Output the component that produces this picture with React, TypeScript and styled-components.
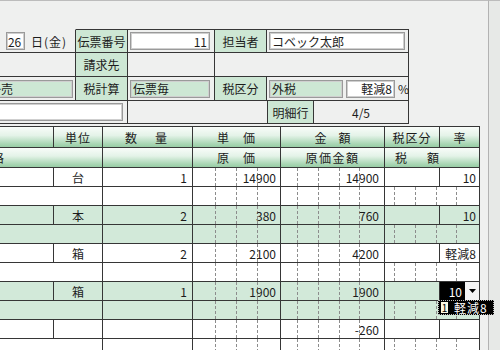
import React from 'react';
import styled, { createGlobalStyle } from 'styled-components';

const LINE = '#363636';
const LABEL_BG = '#cde7d4';
const ROW_GREEN = '#d2e9d9';
const GUIDE = '#8c8c8c';

const GlobalStyle = createGlobalStyle`
  html, body {
    margin: 0;
    padding: 0;
    background: #eff0ef;
    overflow: hidden;
  }
  body {
    font-family: "Noto Sans CJK JP", "Noto Sans", sans-serif;
    font-size: 12px;
    color: #1c1c1c;
  }
`;

type Align = 'left' | 'center' | 'right';

const justify = (a?: Align) =>
  a === 'right' ? 'flex-end' : a === 'center' ? 'center' : 'flex-start';

// dashed digit guides drawn as background layers
const guideLayers = (xs?: number[]) =>
  xs && xs.length
    ? `
    background-image: ${xs.map(() => `linear-gradient(to bottom, ${GUIDE} 60%, transparent 60%)`).join(', ')};
    background-size: 1px 5px;
    background-repeat: repeat-y;
    background-position: ${xs.map(x => `${x}px 0`).join(', ')};
  `
    : '';

const Screen = styled.div`
  display: flex;
  width: 500px;
  height: 350px;
`;

const Panel = styled.div`
  position: relative;
  box-sizing: border-box;
  flex: 0 0 489px;
  height: 350px;
  padding-top: 28px;
  border-top: 1px solid #bcbcbc;
  border-right: 1px solid #b2b2b2;
`;

const SideStrip = styled.div`
  flex: 1;
  border-top: 1px solid #bcbcbc;
  background: #e7e9e7;
`;

const Form = styled.div`
  margin-left: -40px;
  width: 520px;
`;

const TopSection = styled.div`
  width: 449px;
  border-bottom: 1px solid ${LINE};
`;

const TopRow = styled.div<{ $h: number }>`
  display: flex;
  height: ${p => p.$h}px;
`;

const Cell = styled.div<{
  $w: number;
  $bg?: string;
  $align?: Align;
  $pl?: number;
  $pr?: number;
  $noTop?: boolean;
  $guides?: number[];
  $ls?: number;
}>`
  position: relative;
  box-sizing: border-box;
  flex: 0 0 ${p => p.$w}px;
  width: ${p => p.$w}px;
  height: 100%;
  display: flex;
  align-items: center;
  justify-content: ${p => justify(p.$align)};
  padding: 0 ${p => p.$pr ?? 0}px 0 ${p => p.$pl ?? 0}px;
  border-top: 1px solid ${p => (p.$noTop ? 'transparent' : LINE)};
  border-right: 1px solid ${LINE};
  background-color: ${p => p.$bg ?? 'transparent'};
  letter-spacing: ${p => p.$ls ?? 0}px;
  white-space: nowrap;
  ${p => guideLayers(p.$guides)}
`;

const Field = styled.div<{ $w: number; $bg?: string; $align?: Align; $ml?: number }>`
  box-sizing: border-box;
  flex: 0 0 ${p => p.$w}px;
  width: ${p => p.$w}px;
  height: 18px;
  margin-left: ${p => p.$ml ?? 0}px;
  display: flex;
  align-items: center;
  justify-content: ${p => justify(p.$align)};
  padding: 0 2px;
  background: ${p => p.$bg ?? '#ffffff'};
  border: 1px solid #9a9a9a;
  box-shadow: inset 0 0 0 1px #cfcfcf;
  white-space: nowrap;
  overflow: hidden;
`;

const DayBox = styled(Field)`
  padding: 0 0 0 1px;
  margin: 0 6px 0 6px;
`;

const DayText = styled.span`
  letter-spacing: 1px;
`;

const Percent = styled.span`
  margin-left: 3px;
`;

const Table = styled.div`
  margin-top: 2px;
  width: 520px;
`;

const HeaderRow = styled.div<{ $h: number }>`
  display: flex;
  height: ${p => p.$h}px;
  background: linear-gradient(to bottom, #fbfdfb 0%, #e4f3e8 45%, #a9d6b4 85%, #98cda5 100%);
`;

const DataRow = styled.div<{ $green?: boolean; $groupTop?: boolean }>`
  display: flex;
  height: 19px;
  background: ${p => (p.$green ? ROW_GREEN : '#ffffff')};
  box-shadow: ${p => (p.$groupTop ? `inset 0 1px 0 ${LINE}` : 'none')};
`;

const SelectValue = styled.span`
  flex: 1;
  text-align: right;
  padding-right: 3px;
  color: #ffffff;
`;

const ArrowButton = styled.span`
  flex: 0 0 14px;
  height: 100%;
  display: flex;
  align-items: center;
  justify-content: center;
  background: #f4f4f4;
`;

const Dropdown = styled.div`
  position: absolute;
  z-index: 5;
  top: 100%;
  left: -2px;
  box-sizing: border-box;
  width: 56px;
  height: 15px;
  display: flex;
  align-items: center;
  padding: 0 2px;
  background: #000000;
  border: 1px dotted #bdbdbd;
  color: #ffffff;
`;

const Caret = styled.span`
  flex: 0 0 7px;
  height: 11px;
  display: flex;
  align-items: center;
  justify-content: center;
  background: #fdf9e4;
  color: #000;
  font-size: 10px;
  line-height: 1;
`;

const DropItem = styled.span`
  margin-left: 6px;
  letter-spacing: 1px;
`;

interface Item {
  unit: string;
  qty: string;
  price: string;
  amount: string;
  rate: string;
  green: boolean;
  select?: boolean;
}

const items: Item[] = [
  { unit: '台', qty: '1', price: '14900', amount: '14900', rate: '10', green: false },
  { unit: '本', qty: '2', price: '380', amount: '760', rate: '10', green: true },
  { unit: '箱', qty: '2', price: '2100', amount: '4200', rate: '軽減8', green: false },
  { unit: '箱', qty: '1', price: '1900', amount: '1900', rate: '10', green: true, select: true },
  { unit: '', qty: '', price: '', amount: '-260', rate: '', green: false },
];

const PRICE_GUIDES = [22, 43, 64];
const AMOUNT_GUIDES = [16, 37, 58, 78];
const TAX_GUIDES = [9, 30, 51, 71];

const App: React.FC = () => {
  return (
    <>
      <GlobalStyle />
      <Screen>
        <Panel>
          <Form>
            <TopSection>
              <TopRow $h={23}>
                <Cell $w={116} $noTop $align="right" $pr={8}>
                  <span>月</span>
                  <DayBox $w={19}>26</DayBox>
                  <DayText>日(金)</DayText>
                </Cell>
                <Cell $w={52} $bg={LABEL_BG} $align="center">伝票番号</Cell>
                <Cell $w={87}>
                  <Field $w={80} $ml={2} $align="right">11</Field>
                </Cell>
                <Cell $w={52} $bg={LABEL_BG} $align="center">担当者</Cell>
                <Cell $w={142}>
                  <Field $w={136} $ml={2}>コベック太郎</Field>
                </Cell>
              </TopRow>
              <TopRow $h={24}>
                <Cell $w={116} />
                <Cell $w={52} $bg={LABEL_BG} $align="center">請求先</Cell>
                <Cell $w={87} />
                <Cell $w={194} />
              </TopRow>
              <TopRow $h={24}>
                <Cell $w={116}>
                  <Field $w={110} $ml={3} $bg={LABEL_BG} style={{ paddingLeft: 25 }}>掛売</Field>
                </Cell>
                <Cell $w={52} $bg={LABEL_BG} $align="center">税計算</Cell>
                <Cell $w={87}>
                  <Field $w={80} $ml={2} $bg={LABEL_BG}>伝票毎</Field>
                </Cell>
                <Cell $w={52} $bg={LABEL_BG} $align="center">税区分</Cell>
                <Cell $w={142}>
                  <Field $w={74} $ml={2} $bg={LABEL_BG}>外税</Field>
                  <Field $w={49} $ml={3} $align="right">軽減8</Field>
                  <Percent>%</Percent>
                </Cell>
              </TopRow>
              <TopRow $h={23}>
                <Cell $w={168}>
                  <Field $w={160} $ml={3} />
                </Cell>
                <Cell $w={140} />
                <Cell $w={46} $bg={LABEL_BG} $align="center">明細行</Cell>
                <Cell $w={95} $align="center">4/5</Cell>
              </TopRow>
            </TopSection>

            <Table>
              <HeaderRow $h={21}>
                <Cell $w={94} />
                <Cell $w={49} $align="center" $ls={1}>単位</Cell>
                <Cell $w={90} $align="center" $ls={3}>数　量</Cell>
                <Cell $w={88} $align="center" $ls={1}>単　価</Cell>
                <Cell $w={104} $align="center">金　額</Cell>
                <Cell $w={55} $align="center" $ls={1}>税区分</Cell>
                <Cell $w={40} $align="center">率</Cell>
              </HeaderRow>
              <HeaderRow $h={20}>
                <Cell $w={143} $pl={20}>規格</Cell>
                <Cell $w={90} />
                <Cell $w={88} $align="center" $ls={1}>原　価</Cell>
                <Cell $w={104} $align="center" $ls={1.5}>原価金額</Cell>
                <Cell $w={95} $pl={10} $ls={4}>税　額</Cell>
              </HeaderRow>

              {items.map((it, i) => (
                <React.Fragment key={i}>
                  <DataRow $green={it.green} $groupTop={i === items.length - 1}>
                    <Cell $w={94} />
                    <Cell $w={49} $align="center">{it.unit}</Cell>
                    <Cell $w={90} $align="right" $pr={5}>{it.qty}</Cell>
                    <Cell $w={88} $align="right" $pr={4} $guides={PRICE_GUIDES}>{it.price}</Cell>
                    <Cell $w={104} $align="right" $pr={5} $guides={AMOUNT_GUIDES}>{it.amount}</Cell>
                    <Cell $w={55} />
                    {it.select ? (
                      <Cell $w={40} $bg="#000000">
                        <SelectValue>{it.rate}</SelectValue>
                        <ArrowButton>
                          <svg width="7" height="4" viewBox="0 0 7 4">
                            <path d="M0 0h7L3.5 4z" fill="#000" />
                          </svg>
                        </ArrowButton>
                        <Dropdown>
                          <Caret>1</Caret>
                          <DropItem>軽減8</DropItem>
                        </Dropdown>
                      </Cell>
                    ) : (
                      <Cell $w={40} $align="right" $pr={3}>{it.rate}</Cell>
                    )}
                  </DataRow>
                  <DataRow $green={it.green}>
                    <Cell $w={143} />
                    <Cell $w={90} />
                    <Cell $w={88} $guides={PRICE_GUIDES} />
                    <Cell $w={104} $guides={AMOUNT_GUIDES} />
                    <Cell $w={95} $guides={TAX_GUIDES} />
                  </DataRow>
                </React.Fragment>
              ))}
            </Table>
          </Form>
        </Panel>
        <SideStrip />
      </Screen>
    </>
  );
};

export default App;
